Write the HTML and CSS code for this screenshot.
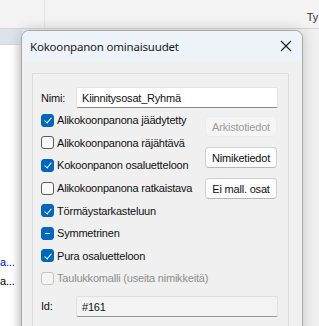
FILE: index.html
```
<html>
<head>
  <title>Kokoonpanon ominaisuudet</title>
  <link rel="stylesheet" href="styles.css">
</head>
<body>
  <div class="app">
    <div class="topbar">
      <div class="tab-left"></div>
      <div class="tab-right">Ty</div>
    </div>
    <div class="workarea">
      <div class="side">
        <div class="side-head"></div>
        <div class="side-list">
          <div class="side-item link">a...</div>
          <div class="side-item">a...</div>
        </div>
      </div>
    </div>
  </div>

  <div class="dialog">
    <div class="titlebar">
      <span class="title">Kokoonpanon ominaisuudet</span>
      <svg class="close" width="12" height="12" viewBox="0 0 12 12">
        <path d="M1 1 L11 11 M11 1 L1 11" stroke="#1a1a1a" stroke-width="1.1" fill="none"/>
      </svg>
    </div>
    <div class="content">
      <div class="group">
        <div class="field">
          <label>Nimi:</label>
          <div class="textbox">Kiinnitysosat_Ryhmä</div>
        </div>

        <div class="options">
          <div class="checks">
            <div class="check"><span class="box on"></span>Alikokoonpanona jäädytetty</div>
            <div class="check"><span class="box"></span>Alikokoonpanona räjähtävä</div>
            <div class="check"><span class="box on"></span>Kokoonpanon osaluetteloon</div>
            <div class="check"><span class="box"></span>Alikokoonpanona ratkaistava</div>
            <div class="check"><span class="box on"></span>Törmäystarkasteluun</div>
            <div class="check"><span class="box mixed"></span>Symmetrinen</div>
            <div class="check"><span class="box on"></span>Pura osaluetteloon</div>
            <div class="check disabled"><span class="box"></span>Taulukkomalli (useita nimikkeitä)</div>
          </div>
          <div class="buttons">
            <button class="btn" disabled>Arkistotiedot</button>
            <button class="btn">Nimiketiedot</button>
            <button class="btn">Ei mall. osat</button>
          </div>
        </div>

        <div class="field id-field">
          <label>Id:</label>
          <div class="textbox readonly">#161</div>
        </div>
      </div>
    </div>
  </div>
</body>
</html>
```

FILE: styles.css
```
body {
  margin: 0;
  width: 319px;
  height: 326px;
  overflow: hidden;
  font-family: 'Liberation Sans', Arial, sans-serif;
  font-size: 11px;
  letter-spacing: -0.2px;
  color: #111;
  background: #f0f0f0;
}
.app {
  display: flex;
  flex-direction: column;
  height: 100%;
}
.topbar {
  height: 29px;
  background: #f3f3f3;
  border-bottom: 1px solid #d6d6d6;
  display: flex;
  box-sizing: border-box;
}
.tab-left {
  width: 44px;
  border-right: 1px solid #e3e3e3;
}
.tab-right {
  flex: 1;
  text-align: right;
  padding-top: 11px;
  padding-right: 1px;
  color: #4a2e2e;
}
.workarea {
  flex: 1;
  display: flex;
}
.side {
  width: 22px;
  background: linear-gradient(to right, #ffffff 60%, #e2e2e2);
  display: flex;
  flex-direction: column;
}
.side-head {
  height: 15px;
  background: #dde3ea;
  border-bottom: 1px solid #cfd6de;
}
.side-list {
  margin-top: auto;
  padding-bottom: 35px;
}
.side-item {
  height: 19px;
  line-height: 19px;
  color: #000;
}
.side-item.link {
  color: #0000ee;
}

.dialog {
  position: absolute;
  left: 21px;
  top: 30px;
  width: 282px;
  height: 310px;
  box-sizing: border-box;
  border: 1px solid #a8a8a8;
  border-radius: 8px 8px 0 0;
  background: #f0f0f0;
  box-shadow: 0 0 14px rgba(0, 0, 0, 0.18);
  overflow: hidden;
}
.titlebar {
  height: 30px;
  background: #eef3f9;
  display: flex;
  align-items: center;
  padding: 0 10px 0 8px;
}
.title {
  flex: 1;
  font-family: 'Noto Sans', sans-serif;
  font-size: 11.5px;
  letter-spacing: -0.2px;
  color: #1a1a1a;
}
.content {
  padding: 12px 13px 0 10px;
}
.group {
  border: 1px solid #dcdcdc;
  border-bottom: none;
  height: 260px;
  padding: 13px 10px 0 8px;
  box-sizing: border-box;
}
.field {
  display: flex;
  align-items: center;
  height: 21px;
}
.field label {
  width: 35px;
}
.textbox {
  flex: 1;
  height: 21px;
  box-sizing: border-box;
  background: #ffffff;
  border: 1px solid #e2e2e2;
  border-bottom: 1px solid #8a8a8a;
  border-radius: 2px;
  padding: 4px 0 0 5px;
}
.textbox.readonly {
  background: #f3f3f3;
  border-color: #e0e0e0;
  border-bottom-color: #999;
}
.options {
  display: flex;
  margin-top: 1px;
}
.checks {
  flex: 1;
  min-width: 0;
  display: flex;
  flex-direction: column;
}
.check {
  height: 22.6px;
  display: flex;
  align-items: center;
  white-space: nowrap;
}
.check.disabled {
  color: #8e8e8e;
}
.box {
  flex: none;
  width: 13px;
  height: 13px;
  box-sizing: border-box;
  border: 1px solid #5c5c5c;
  border-radius: 3px;
  background: #f9f9f9;
  margin-right: 3px;
  position: relative;
}
.check.disabled .box {
  border-color: #c4c4c4;
  background: #f5f5f5;
}
.box.on, .box.mixed {
  background: #0067c0;
  border-color: #0067c0;
}
.box.on::after {
  content: "";
  position: absolute;
  left: 3.5px;
  top: 1.5px;
  width: 3px;
  height: 6px;
  border-right: 1.2px solid #fff;
  border-bottom: 1.2px solid #fff;
  transform: rotate(40deg);
}
.box.mixed::after {
  content: "";
  position: absolute;
  left: 3px;
  top: 5px;
  width: 5px;
  height: 1px;
  background: #fff;
}
.buttons {
  flex: none;
  display: flex;
  flex-direction: column;
  gap: 10px;
  padding-top: 7px;
  margin-right: 1px;
}
.btn {
  width: 72px;
  height: 21px;
  font-family: 'Liberation Sans', Arial, sans-serif;
  font-size: 11px;
  letter-spacing: -0.2px;
  color: #111;
  background: #fdfdfd;
  border: 1px solid #d0d0d0;
  border-bottom-color: #b8b8b8;
  border-radius: 4px;
  padding: 0;
  white-space: nowrap;
}
.btn:disabled {
  background: #f5f5f5;
  border-color: #ececec;
  color: #9d9d9d;
}
.id-field {
  margin-top: 6px;
}
```
